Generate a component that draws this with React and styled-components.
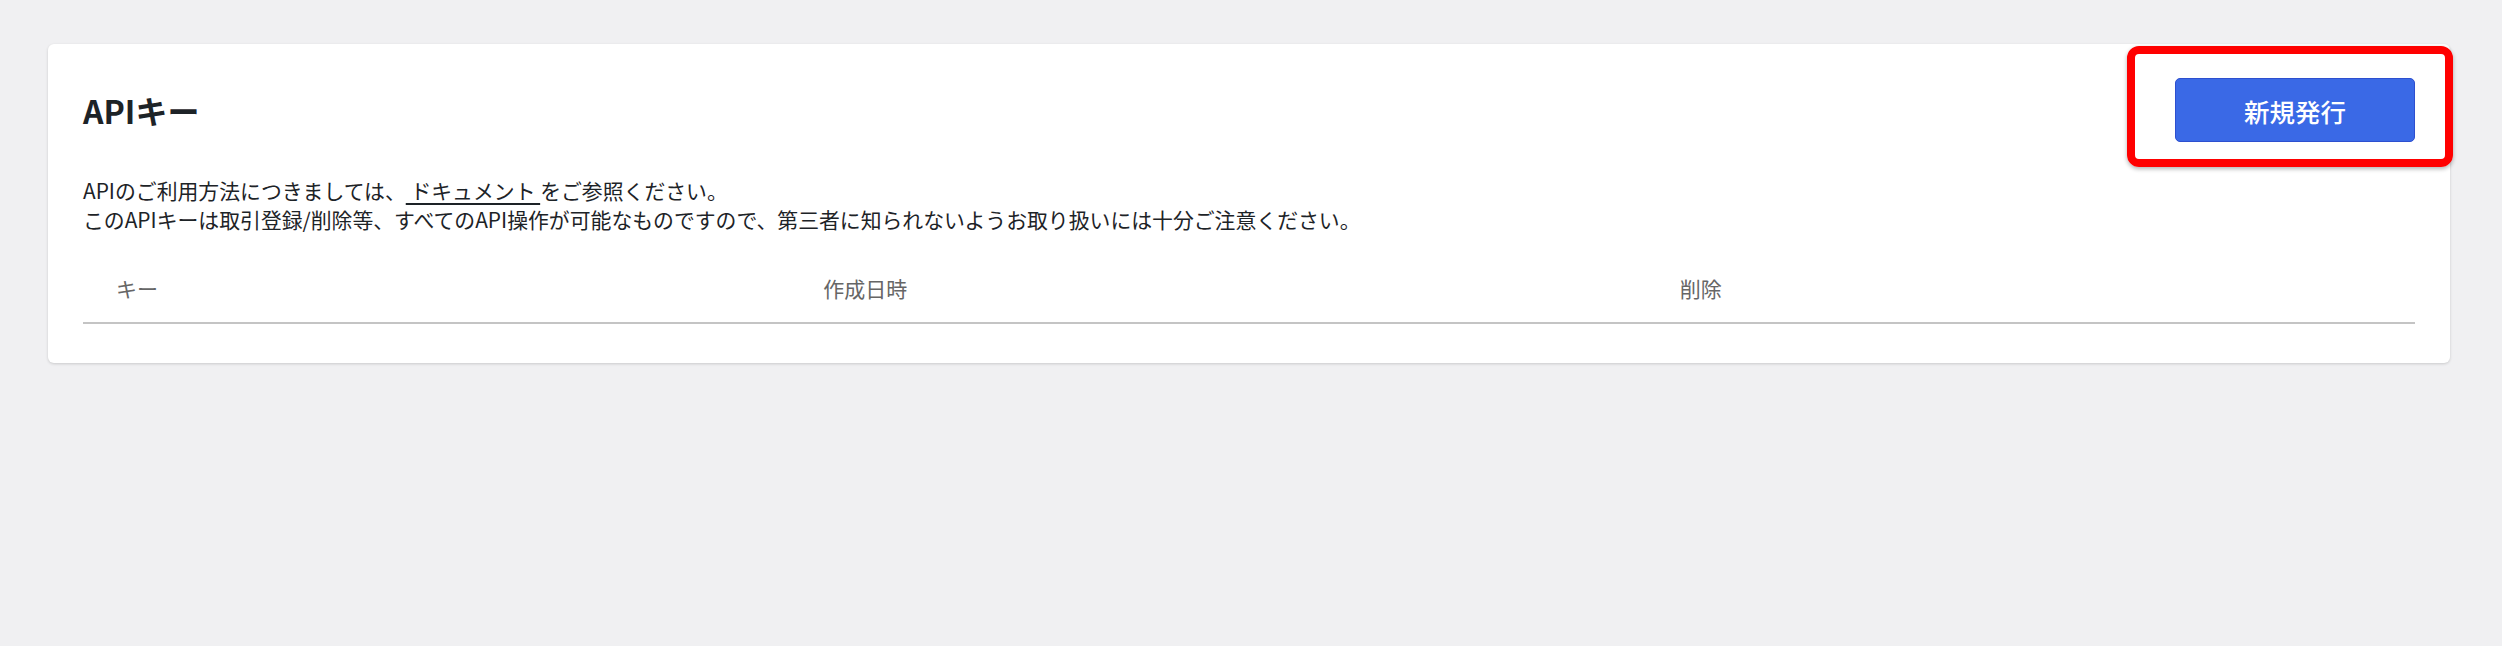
import styled, { createGlobalStyle } from "styled-components";

const GlobalStyle = createGlobalStyle`
  html, body {
    margin: 0;
    padding: 0;
    background: #f0f0f2;
  }
  body {
    font-family: "Noto Sans", "Noto Sans CJK JP", sans-serif;
    color: #1d2327;
  }
`;

const Page = styled.div`
  min-height: 646px;
  box-sizing: border-box;
  padding: 44px 52px 0 48px;
`;

const Card = styled.section`
  position: relative;
  background: #fff;
  border-radius: 6px;
  box-shadow: 0 1px 3px rgba(0, 0, 0, 0.16);
  padding: 34px 35px 39px 35px;
`;

const HeaderRow = styled.div`
  display: flex;
  justify-content: space-between;
  align-items: center;
  height: 64px;
`;

const Title = styled.h2`
  margin: 0;
  font-family: "Noto Sans CJK JP", sans-serif;
  font-size: 32px;
  font-weight: 700;
  line-height: 38px;
  color: #1d2327;
`;

const PrimaryButton = styled.button`
  width: 240px;
  height: 64px;
  box-sizing: border-box;
  border: 1.5px solid #2d4fcf;
  border-radius: 5px;
  background: #3a69e6;
  color: #fff;
  font-family: "Noto Sans CJK JP", sans-serif;
  font-size: 25.5px;
  font-weight: 500;
  cursor: pointer;
`;

const Description = styled.div`
  margin-top: 34px;
  font-family: "Noto Sans CJK JP", sans-serif;
  font-size: 20.85px;
  line-height: 29px;
  color: #1d2327;

  p {
    margin: 0;
  }

  a {
    color: inherit;
    text-decoration: underline;
    text-decoration-thickness: 2px;
    text-underline-offset: 4px;
  }
`;

const Table = styled.div`
  margin-top: 20px;
  display: grid;
  grid-template-columns: 707fr 856fr 768fr;
  border-bottom: 2px solid #c4c4c4;
`;

const HeadCell = styled.div`
  padding: 20px 33px 19px 33px;
  font-family: "Noto Sans CJK JP", sans-serif;
  font-size: 21px;
  line-height: 29px;
  color: #666;
`;

const Highlight = styled.div`
  position: absolute;
  top: 2px;
  right: -3px;
  width: 326px;
  height: 121px;
  box-sizing: border-box;
  border: 8px solid #ff0000;
  border-radius: 12px;
  box-shadow: 0 2px 4px rgba(0, 0, 0, 0.3);
  pointer-events: none;
`;

export default function App() {
  return (
    <>
      <GlobalStyle />
      <Page>
        <Card>
          <HeaderRow>
            <Title>APIキー</Title>
            <PrimaryButton>新規発行</PrimaryButton>
          </HeaderRow>
          <Description>
            <p>
              APIのご利用方法につきましては、<a href="#docs"> ドキュメント </a>をご参照ください。
            </p>
            <p>
              このAPIキーは取引登録/削除等、すべてのAPI操作が可能なものですので、第三者に知られないようお取り扱いには十分ご注意ください。
            </p>
          </Description>
          <Table>
            <HeadCell>キー</HeadCell>
            <HeadCell>作成日時</HeadCell>
            <HeadCell>削除</HeadCell>
          </Table>
          <Highlight />
        </Card>
      </Page>
    </>
  );
}
